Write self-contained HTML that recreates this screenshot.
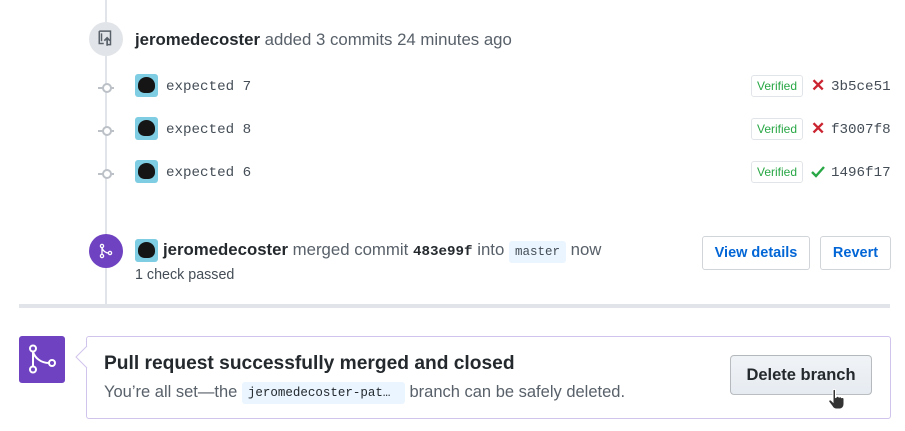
<!DOCTYPE html>
<html><head><style>
*{margin:0;padding:0;box-sizing:border-box}
body{width:905px;height:431px;background:#fff;font-family:"Liberation Sans",sans-serif;color:#24292e;position:relative;overflow:hidden}
.a{position:absolute;white-space:nowrap}
.mono{font-family:"Liberation Mono",monospace}
.av{position:absolute;width:23px;height:23px;border-radius:3px;background:#7ecde3;overflow:hidden}
.av:after{content:"";position:absolute;left:3px;top:3px;width:17px;height:16px;border-radius:50% 50% 40% 40%;background:#151515}
.ver{position:absolute;left:751px;width:52px;height:22px;border:1px solid #e1e4e8;border-radius:3px;color:#28a745;font-size:12px;line-height:20px;text-align:center}
.sha{position:absolute;left:831px;font-size:14.2px;color:#444d56}
.dot{position:absolute;left:98px;width:16px;height:2px;background:#bcc1c8}
.dot:after{content:"";position:absolute;left:4px;top:-4px;width:6px;height:6px;border:2px solid #bcc1c8;border-radius:50%;background:#fff}
.btn{position:absolute;border:1px solid #d1d5da;border-radius:3px;background:#fff;color:#0366d6;font-weight:bold;font-size:14.5px;text-align:center}
</style></head><body>
<div class="a" style="left:105px;top:0;width:2px;height:304px;background:#e1e4e8"></div>
<div class="a" style="left:89px;top:22px;width:34px;height:34px;border-radius:50%;background:#e1e4e8"></div>
<svg class="a" style="left:97px;top:30px" width="18" height="18" viewBox="0 0 16 16"><path d="M2 1h10v12H9M2 1v11h4M4 3v7" fill="none" stroke="#586069" stroke-width="1.3"/><path d="M9 14V7M6.5 9.5L9 7l2.5 2.5" fill="none" stroke="#586069" stroke-width="1.5"/></svg>
<div class="a" style="left:135px;top:30px;font-size:16.8px;color:#586069"><b style="color:#24292e">jeromedecoster</b> added 3 commits 24 minutes ago</div>

<div class="dot" style="top:87px"></div>
<div class="av" style="left:135px;top:74px"></div>
<div class="a mono" style="left:166px;top:79px;font-size:14.2px;color:#444d56">expected 7</div>
<div class="ver" style="top:75px">Verified</div>
<div class="a" style="left:811px;top:76px;color:#cb2431;font-weight:bold;font-size:17px">✕</div>
<div class="sha mono" style="top:79px">3b5ce51</div>

<div class="dot" style="top:130px"></div>
<div class="av" style="left:135px;top:117px"></div>
<div class="a mono" style="left:166px;top:122px;font-size:14.2px;color:#444d56">expected 8</div>
<div class="ver" style="top:118px">Verified</div>
<div class="a" style="left:811px;top:119px;color:#cb2431;font-weight:bold;font-size:17px">✕</div>
<div class="sha mono" style="top:122px">f3007f8</div>

<div class="dot" style="top:173px"></div>
<div class="av" style="left:135px;top:160px"></div>
<div class="a mono" style="left:166px;top:165px;font-size:14.2px;color:#444d56">expected 6</div>
<div class="ver" style="top:161px">Verified</div>
<svg class="a" style="left:810px;top:165px" width="16" height="14"><path d="M2 7l4 4 8-9" fill="none" stroke="#28a745" stroke-width="2.4"/></svg>
<div class="sha mono" style="top:165px">1496f17</div>

<div class="a" style="left:89px;top:234px;width:34px;height:34px;border-radius:50%;background:#6f42c1"></div>
<svg class="a" style="left:99px;top:243px" width="14" height="16"><circle cx="3" cy="3" r="1.6" fill="none" stroke="#fff" stroke-width="1.3"/><circle cx="3" cy="13" r="1.6" fill="none" stroke="#fff" stroke-width="1.3"/><circle cx="11" cy="10" r="1.6" fill="none" stroke="#fff" stroke-width="1.3"/><path d="M3 4.6v6.8M3 5c1 3 4 5 6.4 5" fill="none" stroke="#fff" stroke-width="1.3"/></svg>
<div class="av" style="left:135px;top:239px"></div>
<div class="a" style="left:163px;top:240px;font-size:16.8px;color:#586069"><b style="color:#24292e">jeromedecoster</b> merged commit <b class="mono" style="color:#24292e;font-size:14.2px">483e99f</b> into <span class="mono" style="font-size:12.5px;background:#eaf5ff;color:#444d56;padding:4px 6px;border-radius:3px">master</span> now</div>
<div class="a" style="left:135px;top:267px;font-size:14.3px;color:#444d56">1 check passed</div>
<div class="btn" style="left:702px;top:236px;width:108px;height:34px;line-height:32px">View details</div>
<div class="btn" style="left:820px;top:236px;width:71px;height:34px;line-height:32px">Revert</div>

<div class="a" style="left:19px;top:304px;width:871px;height:4px;background:#e1e4e8"></div>

<div class="a" style="left:19px;top:336px;width:46px;height:47px;border-radius:3px;background:#6f42c1"></div>
<svg class="a" style="left:25px;top:342px" width="34" height="34"><circle cx="8" cy="6.5" r="3" fill="none" stroke="#fff" stroke-width="2"/><circle cx="8" cy="27.5" r="3" fill="none" stroke="#fff" stroke-width="2"/><circle cx="27" cy="21" r="3" fill="none" stroke="#fff" stroke-width="2"/><path d="M8 9.5v15M8 10c2 6 8 11 16 11" fill="none" stroke="#fff" stroke-width="2"/></svg>
<div class="a" style="left:86px;top:336px;width:805px;height:83px;border:1px solid #d1c4ec;border-radius:3px"></div>
<svg class="a" style="left:74px;top:345px" width="14" height="24"><path d="M13 1L2 12l11 11" fill="#fff" stroke="#d1c4ec"/></svg>
<div class="a" style="left:104px;top:353px;font-size:19.2px;font-weight:bold">Pull request successfully merged and closed</div>
<div class="a" style="left:104px;top:383px;font-size:16.5px;color:#586069">You’re all set—the <span class="mono" style="font-size:12.5px;background:#eaf5ff;color:#24292e;padding:4px 6px;border-radius:3px;display:inline-block;width:163px;position:relative;top:-1px">jeromedecoster-pat…</span> branch can be safely deleted.</div>
<div class="a" style="left:730px;top:355px;width:142px;height:40px;border:1px solid rgba(27,31,35,.25);border-radius:4px;background:linear-gradient(#f0f3f6,#e6ebf1);font-size:16.5px;font-weight:bold;text-align:center;line-height:38px">Delete branch</div>
<svg class="a" style="left:826px;top:388px" width="22" height="24"><path d="M7 2.5c0-1.5 2.5-1.5 2.5 0v7l1-.5c.5-1 2.5-1 2.5.5 .5-1 2.5-1 2.5.5 .5-1 2.5-.5 2.5 1V16c0 3-2 5-4 5h-4c-2 0-3-1-4-3l-3-4c-1-1.5 1-3 2.5-1.5L7 14z" fill="#333" stroke="#fff" stroke-width="1"/></svg>
</body></html>
